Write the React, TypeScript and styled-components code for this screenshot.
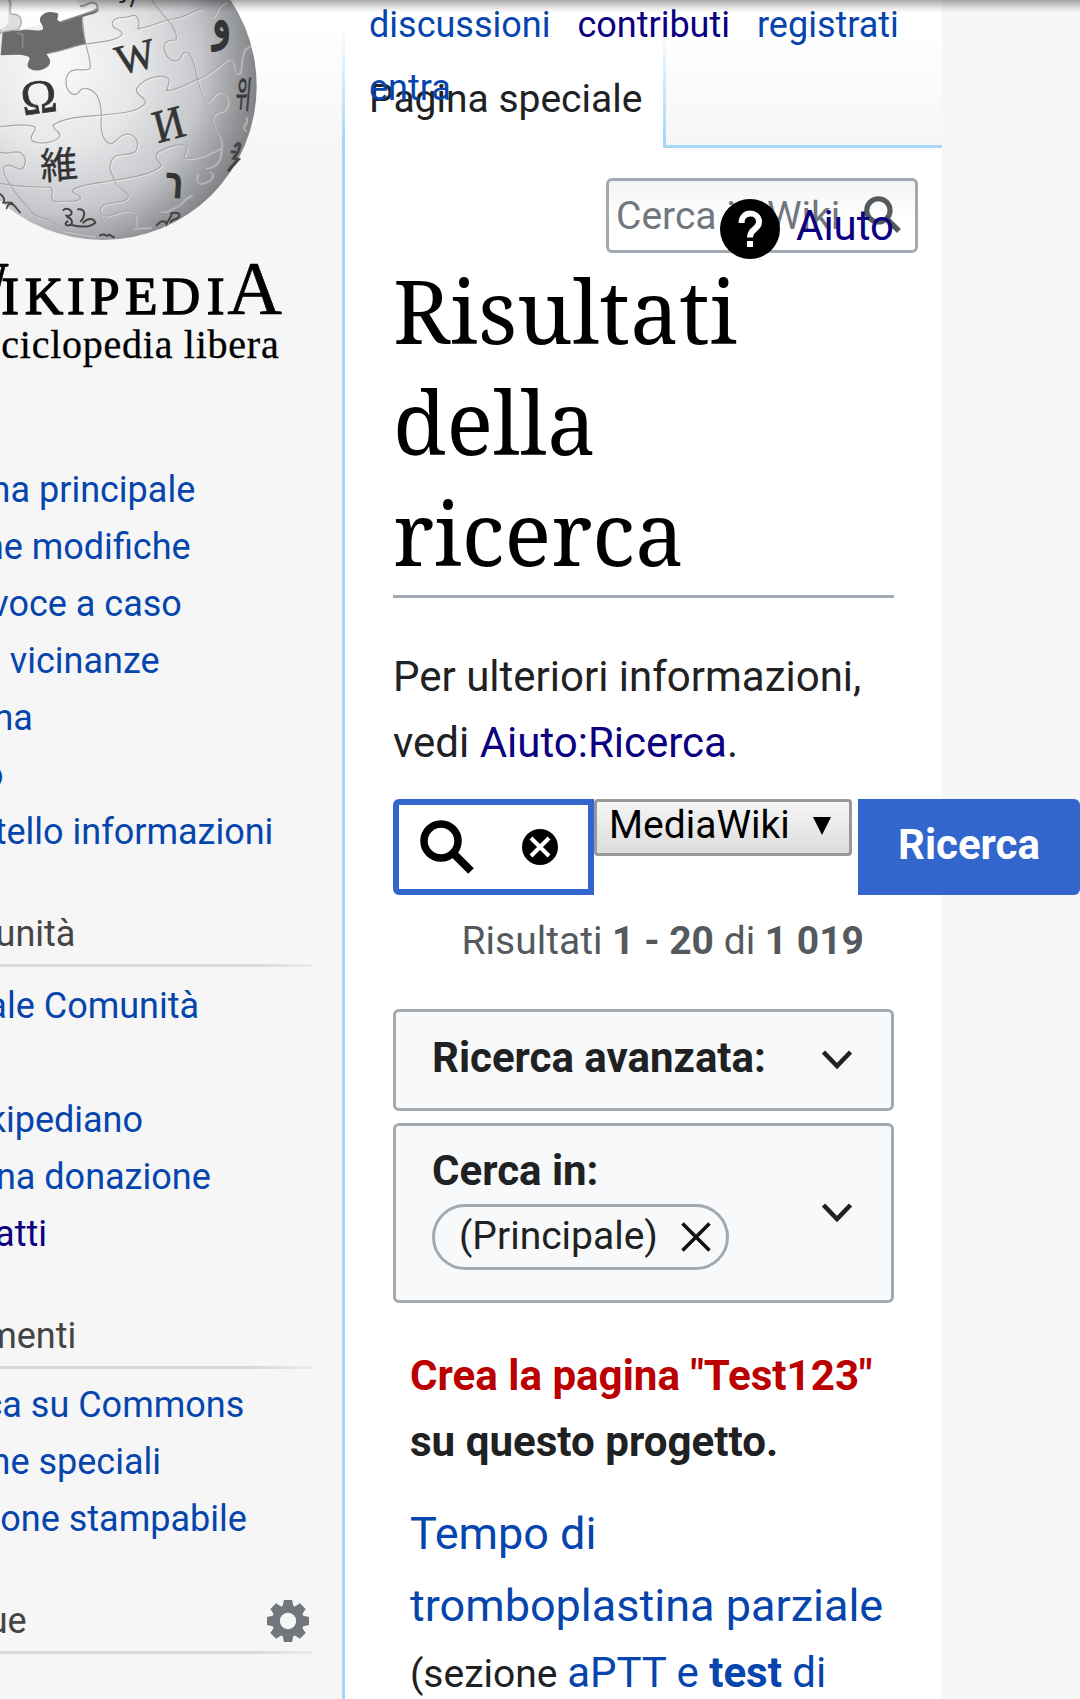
import React from "react";
import styled, { createGlobalStyle } from "styled-components";

const GlobalStyle = createGlobalStyle`
  * { box-sizing: border-box; }
  body { margin: 0; background: #f6f6f6; }
  button, input { font-family: inherit; }
`;

const Page = styled.div`
  position: relative;
  display: flex;
  width: 1080px;
  height: 1699px;
  overflow: hidden;
  background: #f6f6f6;
  color: #202122;
  font-family: Roboto, "Noto Sans", sans-serif;
  font-size: 42px;
  line-height: 66px;
`;

const TopShadow = styled.div`
  position: absolute;
  inset: 0 0 auto 0;
  height: 13px;
  background: linear-gradient(rgba(0, 0, 0, 0.34), rgba(0, 0, 0, 0.18) 40%, rgba(0, 0, 0, 0.04) 80%, transparent);
`;

const Sidebar = styled.aside`
  flex: none;
  width: 342px;
  height: 1699px;
  overflow: hidden;
  background: linear-gradient(#fff 20px, #f6f6f6 150px);
`;

const Logo = styled.svg`
  display: block;
  width: 342px;
  height: 380px;
`;

const Portal = styled.section<{ $top: number }>`
  padding-top: ${(p) => p.$top}px;
  font-size: 36px;
  line-height: 57px;
  white-space: nowrap;
`;

const PortalHead = styled.div`
  display: flex;
  align-items: center;
  justify-content: space-between;
  width: 312px;
  height: 62px;
  border-bottom: 3px solid;
  border-image: linear-gradient(90deg, #d8d8d8 80%, #ececec) 1;
`;

const PortalTitle = styled.h3<{ $shift: number }>`
  margin: 0 0 0 ${(p) => -p.$shift}px;
  color: #444;
  font-size: 36px;
  font-weight: 400;
`;

const PortalList = styled.ul<{ $gap: number }>`
  margin: ${(p) => p.$gap}px 0 0 -80.5px;
  padding: 0;
  list-style: none;
`;

const Link = styled.a<{ $tone?: "visited" | "missing" }>`
  color: ${(p) => (p.$tone === "visited" ? "#0b0080" : p.$tone === "missing" ? "#ba0000" : "#0645ad")};
  text-decoration: none;
`;

const GearIcon = styled.svg`
  width: 42px;
  height: 42px;
  margin: 0 3px 2px 0;
`;

const Content = styled.main`
  position: relative;
  flex: none;
  width: 600px;
  height: 1699px;
  background: #fff;
  border-left: 3px solid;
  border-image: linear-gradient(rgba(167, 215, 249, 0) 25px, #a7d7f9 140px) 1;
`;

const Header = styled.header`
  display: flex;
  height: 148px;
`;

const ActiveTab = styled.div`
  width: 318px;
  padding: 72px 0 0 24px;
  font-size: 39px;
  line-height: 55px;
`;

const TabFiller = styled.div`
  flex: 1;
  background: linear-gradient(#fff 30px, #f6f6f6 145px);
  border-left: 3px solid;
  border-bottom: 3px solid #a7d7f9;
  border-image: linear-gradient(rgba(167, 215, 249, 0) 30px, #a7d7f9 140px) 1;
`;

const PersonalNav = styled.nav`
  position: absolute;
  top: -6px;
  left: 24px;
  display: flex;
  flex-wrap: wrap;
  column-gap: 27px;
  width: 560px;
  font-size: 36px;
  line-height: 63px;
`;

const QuickSearch = styled.form`
  display: flex;
  align-items: center;
  justify-content: space-between;
  width: 312px;
  height: 75px;
  margin: 30px 0 0 261px;
  padding: 0 14px 0 7px;
  border: 3px solid #a2a9b1;
  border-radius: 6px;
  background: linear-gradient(#f4f4f4, #fff 60%);
  color: #72777d;
  font-size: 39px;
  line-height: 60px;
`;

const QuickIcon = styled.svg`
  width: 37px;
  height: 37px;
  margin-bottom: 3px;
`;

const Help = styled.div`
  position: absolute;
  top: 193px;
  left: 375px;
  display: flex;
  align-items: center;
  gap: 16px;
  line-height: 66px;
`;

const HelpText = styled.div`
  padding-bottom: 2px;
`;

const HelpIcon = styled.svg`
  width: 60px;
  height: 60px;
  margin-top: 4px;
`;

const Body = styled.div`
  width: 501px;
  margin: 5px 0 0 48px;
`;

const Title = styled.h1`
  margin: -3px 0 0;
  padding-bottom: 7px;
  border-bottom: 3px solid #a2a9b1;
  color: #000;
  font-family: "Noto Serif", "DejaVu Serif Condensed", "DejaVu Serif", serif;
  font-size: 87px;
  font-weight: 400;
  line-height: 111px;
`;

const Intro = styled.p`
  margin: 46px 0 23px;
`;

const SearchRow = styled.div`
  display: flex;
  align-items: flex-start;
  width: 687px;
  height: 96px;
`;

const SearchField = styled.div`
  display: flex;
  align-items: center;
  justify-content: space-between;
  width: 201px;
  height: 96px;
  padding: 0 30px 0 21px;
  border: 6px solid #36c;
  border-radius: 6px 0 0 6px;
  background: #fff;
  color: #000;
`;

const FieldIcon = styled.svg<{ $size: number }>`
  width: ${(p) => p.$size}px;
  height: ${(p) => p.$size}px;
`;

const ProfileSelect = styled.div`
  display: flex;
  justify-content: space-between;
  width: 258px;
  height: 57px;
  margin-right: 6px;
  padding: 0 18px 0 12px;
  border: 3px solid #999;
  border-radius: 4px;
  background: linear-gradient(#f6f6f6, #dcdcdc);
  color: #000;
  font-size: 39px;
  line-height: 46px;
`;

const SelectArrow = styled.span`
  width: 0;
  height: 0;
  margin-top: 15px;
  border: solid transparent;
  border-width: 18px 9px 0;
  border-top-color: #000;
`;

const SubmitButton = styled.button`
  width: 222px;
  height: 96px;
  padding: 0 0 5px;
  border: 0;
  border-radius: 0 6px 6px 0;
  background: #36c;
  color: #fff;
  font-size: 42px;
  font-weight: 700;
`;

const ResultInfo = styled.div`
  margin-top: 13px;
  padding-right: 30px;
  color: #54595d;
  font-size: 39px;
  text-align: right;
  white-space: nowrap;
`;

const Pane = styled.section<{ $height: number; $top: number }>`
  display: flex;
  align-items: center;
  justify-content: space-between;
  height: ${(p) => p.$height}px;
  margin-top: ${(p) => p.$top}px;
  padding: 0 39px 0 36px;
  border: 3px solid #a2a9b1;
  border-radius: 6px;
  background: #f8f9fa;
`;

const PaneMain = styled.div<{ $lift: number }>`
  padding-bottom: ${(p) => p.$lift}px;
  line-height: 66px;
`;

const PaneLabel = styled.div`
  font-weight: 700;
`;

const Chip = styled.div`
  display: flex;
  align-items: center;
  justify-content: space-between;
  width: 297px;
  height: 66px;
  padding: 0 15px 3px 24px;
  border: 3px solid #a2a9b1;
  border-radius: 33px;
  color: #202122;
  font-size: 39px;
`;

const PaneIcon = styled.svg`
  width: 30px;
  height: 30px;
  flex: none;
  fill: none;
  stroke: #202122;
  stroke-width: 4.5;
`;

const ChipIcon = styled(PaneIcon)`
  margin-top: 3px;
  stroke: #111;
  stroke-width: 3.6;
`;

const Results = styled.div`
  margin: 40px 0 0 17px;
  white-space: nowrap;
`;

const CreateNote = styled.p`
  margin: 0 0 23px;
  font-size: 42.100px;
  font-weight: 700;
`;

const ResultTitle = styled.div`
  font-size: 45px;
  line-height: 72px;
`;

const ResultSection = styled.div`
  margin-top: -2px;
`;

const SectionLabel = styled.span`
  font-size: 39px;
`;

const menus = [
  {
    title: "", shift: 0, top: 82, gap: 0,
    items: ["Pagina principale", "Ultime modifiche", "Una voce a caso", "Nelle vicinanze", "Vetrina", "Aiuto", "Sportello informazioni"],
  },
  {
    title: "Comunità", shift: 80, top: 44, gap: 11,
    items: ["Portale Comunità", "Bar", "Il Wikipediano", "Fai una donazione", "Contatti"],
  },
  {
    title: "Strumenti", shift: 80, top: 44, gap: 8,
    items: ["Carica su Commons", "Pagine speciali", "Versione stampabile"],
  },
  { title: "In altre lingue", shift: 188.5, top: 44, gap: 0, items: [] as string[] },
];

const Magnifier = () => (
  <g fill="none" stroke="currentColor">
    <circle cx="21" cy="21" r="17" strokeWidth="7.5" />
    <path d="M32 32 L51 51" strokeWidth="8" />
  </g>
);

const Gear = () => (
  <GearIcon viewBox="-21 -21 42 42">
    <g fill="#72777d">
      {[0, 45, 90, 135].map((a) => (
        <path key={a} d="M-4 -21H4L6 -12V12L4 21H-4L-6 12V-12Z" transform={`rotate(${a})`} />
      ))}
      <circle r="16" />
    </g>
    <circle r="8.2" fill="#f6f6f6" />
  </GearIcon>
);

const seams = [
  "M248 50C244 80 252 105 258 132C262 160 275 185 270 205C255 218 225 198 205 220C190 248 200 280 225 284C242 280 235 262 262 266C300 275 304 320 304 350C300 390 308 425 332 432C355 425 350 405 385 402C415 408 418 440 405 456C380 470 350 455 335 480C322 508 338 525 344 540C350 570 380 568 386 588C376 614 345 602 312 614C293 630 300 650 325 648C350 642 372 625 400 636C415 650 404 665 410 684",
  "M145 160C185 155 220 138 258 132C300 125 345 125 366 104C370 88 332 90 337 67C350 43 375 60 398 46C416 44 420 66 414 86C455 82 485 60 520 57C550 53 568 38 600 28C618 24 622 50 640 51C655 40 645 20 680 6",
  "M455 0C475 28 492 48 510 68C525 90 532 103 528 120C505 120 484 125 496 160C510 184 532 190 542 174C548 155 560 150 572 168C588 200 588 225 594 240C600 270 610 300 626 304C640 300 640 276 662 276C690 285 686 318 672 332C650 340 636 340 638 365C646 400 668 410 663 440C662 465 661 485 635 500C620 505 620 500 615 503",
  "M0 380C45 375 85 370 106 382C108 398 85 405 98 424C125 434 165 428 180 408C180 390 155 390 160 375C195 350 260 350 304 345C350 340 410 340 436 310C440 290 405 290 410 265C430 238 465 225 494 230C515 234 505 255 500 272C540 270 570 244 594 238C640 222 670 180 692 176C706 188 695 220 714 221C730 215 715 180 735 145L751 137",
  "M0 456C28 468 40 448 62 458C85 475 75 500 65 508C45 506 30 488 12 500C5 520 25 545 35 560C50 585 64 600 80 618",
  "M0 550C60 562 120 560 150 562C168 570 140 600 170 606C205 600 230 610 242 595C240 580 210 582 220 568C250 550 300 550 344 540C410 532 460 520 484 498C482 484 460 480 472 458C500 442 530 430 555 435C568 440 555 460 552 475C590 480 630 460 661 444",
  "M70 608C90 620 88 640 115 650C150 658 175 678 192 692L285 708M400 686C420 678 435 688 452 680M480 632C500 640 510 625 535 615C550 606 552 590 575 585",
  "M738 390C730 395 725 380 739 365V350M592 520C580 550 600 555 625 542C640 530 642 520 628 515",
];

const WikiLogo = () => (
  <Logo viewBox="0 0 1026 1140">
    <defs>
      <radialGradient id="ball" cx="170" cy="200" r="600" gradientUnits="userSpaceOnUse">
        <stop offset="0" stopColor="#fafafa" />
        <stop offset=".4" stopColor="#e6e7e9" />
        <stop offset=".72" stopColor="#c6c8cb" />
        <stop offset="1" stopColor="#828488" />
      </radialGradient>
    </defs>
    <circle cx="308" cy="258" r="462" fill="url(#ball)" />
    <path d="M0 0H230C240 18 236 28 255 25C270 8 285 8 296 28C285 45 260 42 245 52L0 98Z" fill="#fefefe" />
    <path d="M2 166L8 95L65 91C85 86 105 96 128 89C135 75 112 68 122 50C138 32 153 35 173 40C180 50 162 60 182 66L296 28C292 46 265 42 248 52L258 132L140 162C145 175 155 176 148 194C132 215 95 216 84 202C78 185 95 180 86 170C62 162 30 165 2 166Z" fill="#6b6b6b" />
    <path d="M50 98L68 104V145M182 66L296 28" fill="none" stroke="#8a8a8a" strokeWidth="5" />
    <path d="M25 0C45 8 20 35 35 43C60 40 70 60 60 80C52 98 30 86 6 97L0 100V0Z" fill="#ddd" stroke="#aaa" strokeWidth="4" />
    <path d="M0 0H25L25 50C30 65 15 85 0 88Z" fill="#f6f6f6" />
    <path d="M240 18C258 20 262 5 280 8C300 15 295 28 275 34" fill="none" stroke="#a2a2a2" strokeWidth="6" />
    {seams.map((d) => (
      <g key={d} fill="none">
        <path d={d} stroke="#fff" strokeOpacity=".4" strokeWidth="4" transform="translate(3 3)" />
        <path d={d} stroke="#a6a6a6" strokeWidth="3.5" />
      </g>
    ))}
    <g fill="#343434" fontFamily="Liberation Serif, serif" textAnchor="middle">
      <text fontSize="145" transform="translate(123 339) rotate(-8)" stroke="#343434" strokeWidth="2">Ω</text>
      <text fontSize="126" transform="translate(416 211) rotate(-14)" stroke="#343434" strokeWidth="2">W</text>
      <text fontSize="140" transform="translate(518 418) rotate(-15) scale(.92 1)" stroke="#343434" strokeWidth="2">И</text>
      <text fontSize="112" fontFamily="Noto Sans CJK JP, sans-serif" transform="translate(180 535) rotate(-4)" stroke="#343434" strokeWidth="1">維</text>
      <text fontSize="136" fontFamily="DejaVu Sans, sans-serif" transform="translate(666 112) rotate(-4) scale(.85 1.15)" stroke="#343434" strokeWidth="6">و</text>
      <text fontSize="110" fontFamily="Noto Sans CJK KR, sans-serif" transform="translate(728 323) rotate(5) scale(.45 1)" stroke="#444" strokeWidth="3">위</text>
      <text fontSize="122" fontFamily="DejaVu Sans, sans-serif" fontWeight="700" transform="translate(520 594) rotate(4) scale(.78 1.12)">ר</text>
      <text fontSize="66" fontFamily="DejaVu Sans, sans-serif" transform="translate(378 16) rotate(20)">Л</text>
    </g>
    <g fill="none" stroke="#444" strokeWidth="6" strokeLinecap="round">
      <path d="M190 630C205 620 224 636 210 646C196 652 196 640 203 652C217 656 222 672 206 676C195 678 194 668 203 664M234 628C256 624 258 646 242 664M212 674C235 680 268 685 286 668C280 652 262 654 250 668" />
      <path d="M706 438C717 425 724 430 716 448M696 455L713 457L701 475L715 478L686 511" strokeWidth="9" />
      <path d="M0 582C15 592 15 600 10 608L35 608L60 637M20 625C25 605 42 610 52 628" strokeWidth="5" />
      <path d="M470 676C483 660 495 660 500 672C505 655 518 650 514 640C530 635 545 642 536 652C522 664 515 655 512 667M300 706C320 696 315 715 328 704L342 712" />
    </g>
    <g fontFamily="Liberation Serif, serif" fill="#000" stroke="#000">
      <text x="-138" y="942" fontSize="228" textLength="163" lengthAdjust="spacingAndGlyphs" strokeWidth="2">W</text>
      <text x="4 74 201 270 375 485 620" y="942" fontSize="160" strokeWidth="4">IKIPEDI</text>
      <text x="682" y="942" fontSize="226" textLength="164" lengthAdjust="spacingAndGlyphs" strokeWidth="2">A</text>
      <text x="4" y="1075" fontSize="120" textLength="832" lengthAdjust="spacing" strokeWidth="1">ciclopedia libera</text>
    </g>
  </Logo>
);

export default function App() {
  return (
    <>
      <GlobalStyle />
      <Page>
        <Sidebar>
          <WikiLogo />
          {menus.map((menu, index) => (
            <Portal key={index} $top={menu.top}>
              {menu.title && (
                <PortalHead>
                  <PortalTitle $shift={menu.shift}>{menu.title}</PortalTitle>
                  {index === 3 && <Gear />}
                </PortalHead>
              )}
              <PortalList $gap={menu.gap}>
                {menu.items.map((item) => (
                  <li key={item}>
                    <Link $tone={item === "Contatti" ? "visited" : undefined}>{item}</Link>
                  </li>
                ))}
              </PortalList>
            </Portal>
          ))}
        </Sidebar>
        <Content>
          <Header>
            <ActiveTab>Pagina speciale</ActiveTab>
            <TabFiller />
          </Header>
          <PersonalNav>
            <Link>discussioni</Link>
            <Link $tone="visited">contributi</Link>
            <Link>registrati</Link>
            <Link>entra</Link>
          </PersonalNav>
          <QuickSearch>
            <span>Cerca in Wiki</span>
            <QuickIcon viewBox="0 0 54 54" color="#54595d"><Magnifier /></QuickIcon>
          </QuickSearch>
          <Help>
            <HelpIcon viewBox="0 0 60 60">
              <circle cx="30" cy="30" r="30" />
              <path d="M21.500 24C21.500 11 39 12 39 23C39 31 30 29 30 38.500" fill="none" stroke="#fff" strokeWidth="6" />
              <path d="M27 42h6v6h-6z" fill="#fff" />
            </HelpIcon>
            <HelpText><Link $tone="visited">Aiuto</Link></HelpText>
          </Help>
          <Body>
            <Title>
              Risultati<br />
              della<br />
              ricerca
            </Title>
            <Intro>
              Per ulteriori informazioni,<br />
              vedi <Link $tone="visited">Aiuto:Ricerca</Link>.
            </Intro>
            <SearchRow>
              <SearchField>
                <FieldIcon $size={54} viewBox="0 0 54 54"><Magnifier /></FieldIcon>
                <FieldIcon $size={36} viewBox="0 0 36 36">
                  <circle cx="18" cy="18" r="18" />
                  <path d="M9 9L27 27M27 9L9 27" stroke="#fff" strokeWidth="4" />
                </FieldIcon>
              </SearchField>
              <ProfileSelect>
                <span>MediaWiki</span>
                <SelectArrow />
              </ProfileSelect>
              <SubmitButton>Ricerca</SubmitButton>
            </SearchRow>
            <ResultInfo>
              Risultati <b>1 - 20</b> di <b>1 019</b>
            </ResultInfo>
            <Pane $height={102} $top={35}>
              <PaneMain $lift={4}><PaneLabel>Ricerca avanzata:</PaneLabel></PaneMain>
              <PaneIcon viewBox="0 0 30 30"><path d="M1.500 7L15 21L28.500 7" /></PaneIcon>
            </Pane>
            <Pane $height={180} $top={12}>
              <PaneMain $lift={18}>
                <PaneLabel>Cerca in:</PaneLabel>
                <Chip>
                  (Principale)
                  <ChipIcon viewBox="0 0 30 30"><path d="M1.500 1.500L28.500 28.500M28.500 1.500L1.500 28.500" /></ChipIcon>
                </Chip>
              </PaneMain>
              <PaneIcon viewBox="0 0 30 30"><path d="M1.500 7L15 21L28.500 7" /></PaneIcon>
            </Pane>
            <Results>
              <CreateNote>
                <Link $tone="missing">Crea la pagina "Test123"</Link><br />
                su questo progetto.
              </CreateNote>
              <ResultTitle>
                <Link>Tempo di<br />tromboplastina parziale</Link>
              </ResultTitle>
              <ResultSection>
                <SectionLabel>(sezione </SectionLabel>
                <Link>aPTT e <b>test</b> di</Link>
              </ResultSection>
            </Results>
          </Body>
        </Content>
        <TopShadow />
      </Page>
    </>
  );
}
